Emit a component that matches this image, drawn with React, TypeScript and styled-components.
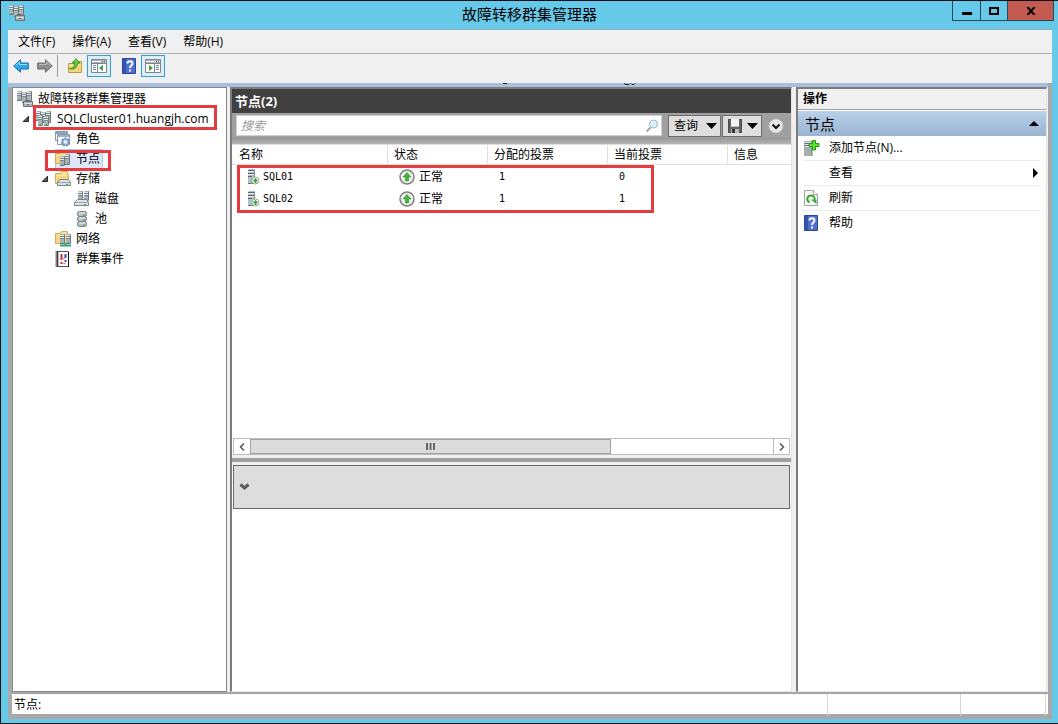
import React from "react";
import styled, { createGlobalStyle, css } from "styled-components";

const uiFont = `"Open Sans", "Noto Sans CJK SC", sans-serif`;

const GlobalStyle = createGlobalStyle`
  *, *::before, *::after { box-sizing: border-box; }
  body { margin: 0; font-family: ${uiFont}; font-size: 12px; line-height: 20px; color: #000; }
  button, input { font: inherit; color: inherit; }
  button { padding: 0; border: 0; background: none; cursor: default; }
  svg { display: block; flex: none; }
  ul { list-style: none; margin: 0; padding: 0; }
`;

/* ---------- window frame ---------- */

const Window = styled.div`
  display: flex;
  flex-direction: column;
  min-height: 100vh;
  background: #67c9ea;
  border: solid #0a0f14;
  border-width: 1px 0 1px 1px;
`;

const TitleBar = styled.header`
  display: grid;
  grid-template-columns: 1fr auto 1fr;
  height: 28px;
  padding: 0 4px 0 9px;
`;

const TitleIcon = styled.div`
  margin-left: -1px;
  padding-top: 4px;
`;

const Title = styled.h1`
  margin: 0;
  padding-right: 5px;
  font-size: 15px;
  font-weight: 400;
  line-height: 27px;
`;

const WindowButtons = styled.div`
  display: flex;
  justify-self: end;
  height: 20px;
  border: solid #274a58;
  border-width: 0 1px 1px;
`;

const WindowButton = styled.button<{ $wide?: boolean }>`
  display: flex;
  align-items: center;
  justify-content: center;
  width: ${(p) => (p.$wide ? 46 : 27)}px;
  background: ${(p) => (p.$wide ? "#c35b50" : "transparent")};
  & + & { border-left: 1px solid #274a58; }
`;

const Client = styled.div`
  flex: 1;
  display: flex;
  flex-direction: column;
  margin: 0 6px 4px 7px;
  border-top: 1px solid #8fb3c1;
  background: #a9a9a9;
`;

const MenuBar = styled.nav`
  display: flex;
  gap: 17px;
  height: 24px;
  padding: 0 10px;
  background: #f0f0f0;
  border-bottom: 1px solid #b0b0b0;
`;

const MenuItem = styled.button`
  line-height: 22px;
`;

const ToolBar = styled.div`
  display: flex;
  align-items: center;
  height: 29px;
  padding: 1px;
  padding-bottom: 6px;
  background: #f0f0f0;
`;

const ToolButton = styled.button<{ $active?: boolean }>`
  display: flex;
  align-items: center;
  justify-content: center;
  width: 24px;
  height: 22px;
  border: 1px solid ${(p) => (p.$active ? "#35a0cc" : "transparent")};
  background: ${(p) => (p.$active ? "#dcedf6" : "transparent")};
`;

const ToolDivider = styled.span`
  width: 1px;
  height: 22px;
  background: #9a9a9a;
`;

const ToolGroup = styled.div`
  display: flex;
  & + & { margin-left: 6px; }
  ${ToolDivider} + & { margin-left: 5px; }
`;

const Strip = styled.div`
  height: 4px;
  margin-right: 4px;
  background: #a9bfdc;
`;

const Panels = styled.main`
  flex: 1;
  display: grid;
  grid-template-columns: 215px minmax(0, 1fr) 251px;
  column-gap: 4px;
  margin: 0 4px;
  padding-right: 1px;
  background: #f0f0f0;
`;

const StatusBar = styled.footer`
  display: grid;
  grid-template-columns: 1fr 133px 85px 3px;
  height: 21px;
  margin: 1px 4px 5px;
  border-top: 1px solid #a0a0a0;
  background: #fff;
`;

const StatusCell = styled.div`
  padding-left: 2px;
  line-height: 22px;
  & + & { border-left: 1px solid #d7d7d7; }
`;

/* ---------- navigation tree ---------- */

const TreePanel = styled.nav`
  padding-top: 1px;
  border: 1px solid #828790;
  background: #fff;
`;

const TreeRow = styled.li<{ $level: number }>`
  position: relative;
  display: flex;
  align-items: center;
  height: 20px;
  padding-left: ${(p) => (p.$level ? p.$level * 19 - 10 : 4)}px;
`;

const Expander = styled.span`
  width: 14px;
`;

const TreeItem = styled.button<{ $selected?: boolean }>`
  display: flex;
  align-items: center;
  gap: 5px;
  height: 20px;
  padding-right: 3px;
  white-space: nowrap;
  ${(p) =>
    p.$selected &&
    css`
      background: #dce6f8;
      box-shadow: inset 0 0 0 1px #b5c9ea;
    `}
`;

const Marker = styled.span<{ $left: number; $top: number; $width: number; $height: number }>`
  position: absolute;
  left: ${(p) => p.$left}px;
  top: ${(p) => p.$top}px;
  width: ${(p) => p.$width}px;
  height: ${(p) => p.$height}px;
  border: 3px solid #e33b3e;
  pointer-events: none;
`;

/* ---------- node list ---------- */

const Middle = styled.section`
  display: flex;
  flex-direction: column;
  margin-left: -1px;
  border: solid;
  border-width: 2px 1px 1px 2px;
  border-color: #7c7c7c #e3e3e3 #e3e3e3 #7c7c7c;
  background: #fff;
`;

const PaneTitle = styled.h2`
  margin: 0;
  padding-left: 3px;
  font-size: 13px;
  font-weight: 700;
  line-height: 24px;
  color: #fff;
  background: #404040;
`;

const SearchRow = styled.div`
  display: flex;
  align-items: flex-start;
  height: 31px;
  padding: 2px 7px 0 4px;
  background: linear-gradient(#a0a0a0 24px, #989898 25px, #b4b4b4);
`;

const SearchBox = styled.label`
  flex: 1;
  display: flex;
  align-items: center;
  height: 21px;
  margin-right: 6px;
  padding: 0 2px 0 4px;
  border: 1px solid #d0d0d0;
  background: #fff;
`;

const SearchInput = styled.input`
  flex: 1;
  min-width: 0;
  height: 18px;
  padding: 0;
  border: 0;
  outline: 0;
  background: transparent;
  &::placeholder { color: #9a9a9a; font-style: italic; opacity: 1; }
`;

const DropButton = styled.button<{ $width: number }>`
  display: flex;
  align-items: center;
  justify-content: space-between;
  width: ${(p) => p.$width}px;
  height: 22px;
  margin-right: 1px;
  padding: 0 3px 0 5px;
  line-height: 20px;
  border: 1px solid #6c6c6c;
  background: #dedede;
`;

const RoundButton = styled.button`
  margin: 3px 0 0 5px;
`;

const ListArea = styled.div`
  position: relative;
  flex: 21 1 0;
`;

const Table = styled.table`
  width: 100%;
  table-layout: fixed;
  border-collapse: separate;
  border-spacing: 0;
`;

const HeadCell = styled.th`
  height: 21px;
  padding: 1px 0 0 6px;
  font-weight: 400;
  line-height: 18px;
  text-align: left;
  border: solid #dfdfdf;
  border-width: 1px 1px 1px 0;
  &:last-child { border-right: 0; }
  &:first-child { padding-left: 7px; }
`;

const Cell = styled.td`
  height: 22px;
  padding: 2px 0 0 11px;
  font-family: "DejaVu Sans Mono", "Noto Sans CJK SC", monospace;
  font-size: 10px;
  line-height: 20px;
  &:first-child { padding-left: 15px; }
`;

const IconText = styled.span<{ $gap: number; $large?: boolean }>`
  display: flex;
  align-items: center;
  gap: ${(p) => p.$gap}px;
  font-size: ${(p) => (p.$large ? 12 : 10)}px;
`;

const ScrollBar = styled.div`
  display: grid;
  grid-template-columns: 16px minmax(0, 1fr) 16px;
  height: 17px;
  margin: 0 1px;
  border: 1px solid #bdbdbd;
`;

const ScrollArrow = styled.button`
  display: flex;
  align-items: center;
  justify-content: center;
  &:last-child { border-left: 1px solid #bdbdbd; }
`;

const ScrollThumb = styled.div`
  display: flex;
  align-items: center;
  justify-content: center;
  width: 69%;
  border: 1px solid #a0a0a0;
  background: #dcdcdc;
`;

const Splitter = styled.div`
  height: 10px;
  border: solid #f0f0f0;
  border-width: 3px 0;
  background: #a0a0a0;
`;

const DetailsHead = styled.div`
  display: flex;
  align-items: center;
  height: 44px;
  margin: 0 1px;
  padding-left: 5px;
  border: 1px solid #696969;
  background: #dddddd;
`;

const DetailsBody = styled.div`
  flex: 13 1 0;
`;

/* ---------- actions ---------- */

const Actions = styled.aside`
  border: solid;
  border-width: 2px 1px 1px 2px;
  border-color: #7c7c7c #e3e3e3 #e3e3e3 #7c7c7c;
  background: #fff;
`;

const ActionsTitle = styled.h2`
  margin: 0 0 1px;
  padding-left: 5px;
  font-size: 12px;
  font-weight: 700;
  line-height: 20px;
  background: #f0f0f0;
  border-bottom: 1px solid #a0a0a0;
`;

const ActionsGroup = styled.button`
  display: flex;
  align-items: center;
  justify-content: space-between;
  width: 100%;
  height: 25px;
  padding: 0 7px;
  font-size: 15px;
  background: linear-gradient(#b9d1ea, #99b4d1);
`;

const ActionItem = styled.li`
  margin: 0 5px;
  & + & { border-top: 1px solid #ececec; }
`;

const ActionButton = styled.button`
  display: grid;
  grid-template-columns: 16px 1fr auto;
  gap: 9px;
  align-items: center;
  width: 100%;
  height: 24px;
  padding-left: 1px;
  text-align: left;
`;

/* ---------- icons ---------- */

const Tower = ({ x, y, h = 10 }: { x: number; y: number; h?: number }) => (
  <g>
    <path d={`M${x} ${y + 1}l1-1h4v${h}l-1 1h-4z`} fill="#aab4b8" />
    <path d={`M${x + 4} ${y + 1}l1-1v${h}l-1 1z`} fill="#6d787d" />
    <path d={`M${x} ${y + 1.5}h4M${x} ${y + 3.5}h4`} stroke="#e3e9eb" />
    <path d={`M${x} ${y + 2.5}h4M${x} ${y + 4.5}h4`} stroke="#7b868c" />
    <path d={`M${x + 2} ${y + h - 0.5}h1`} stroke="#3fae4c" />
    <path d={`M${x} ${y + h + 0.5}h4`} stroke="#6d787d" />
  </g>
);

const ClusterIcon = ({ box = true }: { box?: boolean }) => (
  <svg width="16" height="16" viewBox="0 0 16 16">
    <Tower x={0} y={0} h={9} />
    <Tower x={10} y={0} h={11} />
    <Tower x={5} y={1} h={10} />
    {box ? (
      <g>
        <path d="M8.500 11V9.500h4V11" fill="none" stroke="#5f696e" />
        <path d="M6.500 10.500h9v5h-9z" fill="#a9b0b3" stroke="#6a7479" />
        <path d="M7 12.500h8" stroke="#dce1e3" />
        <path d="M10 13.500h2" stroke="#5f696e" />
      </g>
    ) : (
      <g>
        <Tower x={2} y={4} h={10} />
        <Tower x={8} y={5} h={9} />
      </g>
    )}
  </svg>
);

const Folder = () => (
  <g>
    <path d="M.5 2.500h5l1-2h6v3h1v9H.5z" fill="#f4d782" stroke="#d2ad5c" />
    <path d="M7.500 2h4" stroke="#fff4c8" />
    <path d="M1.500 4.500h11" stroke="#fbeab0" />
  </g>
);

const RolesIcon = () => (
  <svg width="16" height="16" viewBox="0 0 16 16">
    <path d="M.5.5h12v9H.5z" fill="#f4f7f9" stroke="#8b99a6" />
    <path d="M1 2h11" stroke="#8aa4be" strokeWidth="2" />
    <path d="M2.500 3.500h12v10h-12z" fill="#f8fafb" stroke="#8b99a6" />
    <path d="M3 5h11" stroke="#9db5cc" strokeWidth="2" />
    <circle cx="10.500" cy="11" r="3.500" fill="#a9c8e2" stroke="#5e87ad" strokeWidth="2" strokeDasharray="2 1" />
    <circle cx="10.500" cy="11" r="1.500" fill="#eef5fa" />
  </svg>
);

const NodesIcon = () => (
  <svg width="16" height="16" viewBox="0 0 16 16">
    <Folder />
    <Tower x={5} y={5} h={9} />
    <Tower x={10} y={3} h={10} />
  </svg>
);

const StorageIcon = () => (
  <svg width="16" height="16" viewBox="0 0 16 16">
    <Folder />
    <path d="M4.500 8.500l-2 3v3h13v-3l-2-3z" fill="#dfe3e5" stroke="#78828a" />
    <path d="M3 11.500h12" stroke="#9aa4aa" />
    <path d="M11 13.500h2" stroke="#37b34a" />
  </svg>
);

const DiskIcon = () => (
  <svg width="16" height="16" viewBox="0 0 16 16">
    <Tower x={4} y={0} h={9} />
    <Tower x={10} y={0} h={9} />
    <path d="M3.500 8.500l-3 3v3h14v-3l-2-3z" fill="#dfe3e5" stroke="#78828a" />
    <path d="M1 11.500h13" stroke="#9aa4aa" />
    <path d="M10 13.500h2" stroke="#37b34a" />
  </svg>
);

const PoolIcon = () => (
  <svg width="16" height="16" viewBox="0 0 16 16">
    {[0, 5, 10].map((y) => (
      <g key={y}>
        <rect x="3.500" y={y + 0.5} width="9" height="5" rx="2" fill="#b6bfc2" stroke="#737d82" />
        <path d={`M5 ${y + 2}h6`} stroke="#eef1f2" />
        <path d={`M9 ${y + 4}h2`} stroke="#399c49" />
      </g>
    ))}
  </svg>
);

const NetworkIcon = () => (
  <svg width="16" height="16" viewBox="0 0 16 16">
    <Folder />
    <Tower x={5} y={3} h={9} />
    <Tower x={11} y={3} h={9} />
    <path d="M5 14.500h11M10.500 12v3" stroke="#2aa37a" strokeWidth="2" />
  </svg>
);

const EventsIcon = () => (
  <svg width="16" height="16" viewBox="0 0 16 16">
    <path d="M2.500.5h11v15h-11z" fill="#fff" stroke="#555" />
    <path d="M13.500 1v15" stroke="#111" />
    <path d="M2 .5v15" stroke="#111" strokeWidth="3" strokeDasharray="1 1" />
    <path d="M6.500 3v6M6.500 11v2" stroke="#d2232a" strokeWidth="2" />
    <path d="M10.500 3v4M10.500 9v2" stroke="#3a49b5" strokeWidth="2" />
    <path d="M5 9l5-2M8 12l3 1" stroke="#e0737a" />
  </svg>
);

const BackIcon = ({ grey }: { grey?: boolean }) => (
  <svg width="16" height="14" viewBox="0 0 16 14">
    <g transform={grey ? "matrix(-1 0 0 1 16 0)" : undefined}>
      <path
        d="M.7 7L7.500.8V4h7.800v6H7.500v3.200z"
        fill={grey ? "#8d8d8d" : "#2fa5ea"}
        stroke={grey ? "#6c6c6c" : "#176fae"}
      />
      <path d="M2.500 6.500L6.500 3v2.500h7.500" fill="none" stroke={grey ? "#b9b9b9" : "#9bdcff"} />
    </g>
  </svg>
);

const UpFolderIcon = () => (
  <svg width="16" height="16" viewBox="0 0 16 16">
    <path d="M1.500 5.500h5l2-2h6v11h-13z" fill="#f3d37c" stroke="#bf9a47" />
    <path d="M2 7.500h12" stroke="#fdebb0" />
    <path d="M2.500 10.500c4 0 5-2 5-5.500H5L9 .8l4 4.200h-2.500c0 5-4 7-8 5.500z" fill="#6acb3c" stroke="#3a9427" />
  </svg>
);

const PaneIcon = ({ right }: { right?: boolean }) => (
  <svg width="16" height="14" viewBox="0 0 16 14">
    <path d="M.5.5h15v13H.5z" fill="#fff" stroke="#7e8790" />
    <path d="M1 1.500h14M1 3.500h14" stroke="#a9b0b7" />
    <path d="M11 2.500h1M13 2.500h1" stroke="#3b4249" />
    <path d="M1 4.500h14" stroke="#7e8790" />
    {right ? (
      <g>
        <path d="M9.500 5v8" stroke="#7e8790" />
        <path d="M11 6.500h3M11 8.500h3M11 10.500h3" stroke="#6d8ba9" />
        <path d="M4 6l4 3-4 3z" fill="#3aa535" />
      </g>
    ) : (
      <g>
        <path d="M6.500 5v8" stroke="#7e8790" />
        <path d="M2 6.500h3M2 8.500h3M2 10.500h3" stroke="#6d8ba9" />
        <path d="M12 6L8 9l4 3z" fill="#3aa535" />
      </g>
    )}
  </svg>
);

const HelpIcon = () => (
  <svg width="14" height="16" viewBox="0 0 14 16">
    <path d="M.5.5h13v15H.5z" fill="#4f70cd" stroke="#2a479f" />
    <path d="M1 1h3v14H1z" fill="#3454b2" />
    <path d="M5.500 5.500C5.500 2.500 10.500 2.500 10.500 5.500c0 2-2.500 2-2.500 4.500M8 11.500v2" fill="none" stroke="#fff" strokeWidth="2" />
  </svg>
);

const SearchIcon = () => (
  <svg width="14" height="14" viewBox="0 0 14 14">
    <path d="M1.500 12.500l4-4" stroke="#a7a7a7" strokeWidth="2" />
    <circle cx="8.500" cy="5" r="4" fill="#d9effa" stroke="#9db3c2" />
    <path d="M6.500 4.500c0-1 1-2 2-2" fill="none" stroke="#fff" />
  </svg>
);

const DownCaret = () => (
  <svg width="11" height="6" viewBox="0 0 11 6">
    <path d="M0 0h11L5.500 6z" />
  </svg>
);

const SaveIcon = () => (
  <svg width="14" height="14" viewBox="0 0 14 14">
    <path d="M0 0h14v14H1l-1-1z" fill="#636363" />
    <path d="M.5.5h13v13H.5z" fill="none" stroke="#484848" />
    <path d="M3 0h8v8H3z" fill="#f4f4f4" />
    <path d="M3 7.500h8" stroke="#c4c4c4" />
    <path d="M3 10h8v4H3z" fill="#b9b9b9" />
    <path d="M4 10h3v4H4z" fill="#333" />
  </svg>
);

const ExpandIcon = () => (
  <svg width="16" height="16" viewBox="0 0 16 16">
    <circle cx="8" cy="8" r="7" fill="#e6e6e6" stroke="#c4c4c4" />
    <path d="M4.500 6.500L8 10l3.500-3.500" fill="none" stroke="#111" strokeWidth="2" />
  </svg>
);

const ServerIcon = () => (
  <svg width="13" height="16" viewBox="0 0 13 16">
    <path d="M1 1l1-1h6v14l-1 1H1z" fill="#b3bfc5" />
    <path d="M7.500 1v13" stroke="#7f8b91" />
    <path d="M1 1.500h6M1 4.500h6M1 7.500h4" stroke="#59666d" />
    <path d="M1 2.500h6M1 5.500h6" stroke="#e7edf0" />
    <path d="M1 14.500h5" stroke="#6b777d" />
    <circle cx="8.500" cy="11.500" r="3.500" fill="#eef3ee" stroke="#a3aaa3" />
    <path d="M8.500 9l2.500 3H9.500v2h-2v-2H6z" fill="#32a72c" />
  </svg>
);

const OkIcon = () => (
  <svg width="16" height="16" viewBox="0 0 16 16">
    <circle cx="8" cy="8" r="7" fill="#eeeeee" stroke="#7f7f7f" strokeWidth="1.500" />
    <path d="M8 3.500l4 4.500H9.500v4h-3V8H4z" fill="#3db832" stroke="#258a20" strokeWidth=".5" />
  </svg>
);

const AddNodeIcon = () => (
  <svg width="16" height="16" viewBox="0 0 16 16">
    <path d="M0 1h8v15H0z" fill="#a4adb0" />
    <path d="M8 1v15" stroke="#767f83" />
    <path d="M1 2.500h6M1 4.500h6M1 6.500h6" stroke="#e6ebec" />
    <path d="M1 3.500h6M1 5.500h6" stroke="#5d696f" />
    <path d="M5 14.500h2" stroke="#7ef024" />
    <path d="M8.500.5h3v3h3.500v3h-3.500v3.500h-3V6.500H5v-3h3.500z" fill="#5fdc2c" stroke="#239a17" />
  </svg>
);

const RefreshIcon = () => (
  <svg width="14" height="16" viewBox="0 0 14 16">
    <path d="M.5.5h9l4 4v11H.5z" fill="#f6f8f6" stroke="#a5a5a5" />
    <path d="M9.500.5v4h4" fill="#fff" stroke="#a5a5a5" />
    <path d="M5.500 12.500C1.500 10 3.500 5.500 7 5.500s4.500 3 3 5.500" fill="none" stroke="#3da838" strokeWidth="2" />
    <path d="M7 9.500h5.500V14z" fill="#3da838" />
  </svg>
);

const TreeArrow = () => (
  <svg width="8" height="8" viewBox="0 0 8 8">
    <path d="M6.500 1.200v5.300H1.200z" fill="#595959" stroke="#262626" />
  </svg>
);

/* ---------- data ---------- */

type Node = {
  level: number;
  label: string;
  icon: React.ReactNode;
  open?: boolean;
  selected?: boolean;
  marker?: { left: number; top: number; width: number; height: number };
};

const nodes: Node[] = [
  { level: 0, label: "故障转移群集管理器", icon: <ClusterIcon /> },
  {
    level: 1,
    label: "SQLCluster01.huangjh.com",
    icon: <ClusterIcon box={false} />,
    open: true,
    marker: { left: 20, top: -4, width: 184, height: 25 },
  },
  { level: 2, label: "角色", icon: <RolesIcon /> },
  {
    level: 2,
    label: "节点",
    icon: <NodesIcon />,
    selected: true,
    marker: { left: 32, top: 1, width: 66, height: 21 },
  },
  { level: 2, label: "存储", icon: <StorageIcon />, open: true },
  { level: 3, label: "磁盘", icon: <DiskIcon /> },
  { level: 3, label: "池", icon: <PoolIcon /> },
  { level: 2, label: "网络", icon: <NetworkIcon /> },
  { level: 2, label: "群集事件", icon: <EventsIcon /> },
];

const servers = [
  { name: "SQL01", state: "正常", assigned: 1, current: 0 },
  { name: "SQL02", state: "正常", assigned: 1, current: 1 },
];

const actions = [
  { label: "添加节点(N)...", icon: <AddNodeIcon /> },
  { label: "查看", icon: <span />, submenu: true },
  { label: "刷新", icon: <RefreshIcon /> },
  { label: "帮助", icon: <HelpIcon /> },
];

export default function App() {
  return (
    <Window>
      <GlobalStyle />
      <TitleBar>
        <TitleIcon>
          <ClusterIcon />
        </TitleIcon>
        <Title>故障转移群集管理器</Title>
        <WindowButtons>
          <WindowButton aria-label="最小化">
            <svg width="10" height="10" viewBox="0 0 10 10">
              <path d="M0 6h10v3H0z" />
            </svg>
          </WindowButton>
          <WindowButton aria-label="最大化">
            <svg width="10" height="8" viewBox="0 0 10 8">
              <path d="M1 1h8v6H1z" fill="none" stroke="#000" strokeWidth="2" />
            </svg>
          </WindowButton>
          <WindowButton $wide aria-label="关闭">
            <svg width="10" height="8" viewBox="0 0 10 8">
              <path d="M1.500 0l7 8M8.500 0l-7 8" stroke="#000" strokeWidth="2" />
            </svg>
          </WindowButton>
        </WindowButtons>
      </TitleBar>

      <Client>
        <MenuBar>
          {["文件(F)", "操作(A)", "查看(V)", "帮助(H)"].map((m) => (
            <MenuItem key={m}>{m}</MenuItem>
          ))}
        </MenuBar>
        <ToolBar>
          <ToolGroup>
            <ToolButton aria-label="后退">
              <BackIcon />
            </ToolButton>
            <ToolButton aria-label="前进">
              <BackIcon grey />
            </ToolButton>
          </ToolGroup>
          <ToolDivider />
          <ToolGroup>
            <ToolButton aria-label="向上">
              <UpFolderIcon />
            </ToolButton>
            <ToolButton $active aria-label="显示控制台树">
              <PaneIcon />
            </ToolButton>
          </ToolGroup>
          <ToolGroup>
            <ToolButton aria-label="帮助">
              <HelpIcon />
            </ToolButton>
            <ToolButton $active aria-label="显示操作窗格">
              <PaneIcon right />
            </ToolButton>
          </ToolGroup>
        </ToolBar>
        <Strip>
          <svg width="640" height="4" viewBox="0 0 640 4">
            <path d="M495 .5h4M616 .5l2 1h3l1-1M623 .5l1 1h2l1-1" fill="none" stroke="#222" />
          </svg>
        </Strip>

        <Panels>
          <TreePanel aria-label="控制台树">
            <ul>
              {nodes.map((n) => (
                <TreeRow key={n.label} $level={n.level}>
                  {n.level > 0 && <Expander>{n.open && <TreeArrow />}</Expander>}
                  <TreeItem $selected={n.selected}>
                    {n.icon}
                    {n.label}
                  </TreeItem>
                  {n.marker && (
                    <Marker
                      $left={n.marker.left}
                      $top={n.marker.top}
                      $width={n.marker.width}
                      $height={n.marker.height}
                    />
                  )}
                </TreeRow>
              ))}
            </ul>
          </TreePanel>

          <Middle>
            <PaneTitle>节点(2)</PaneTitle>
            <SearchRow>
              <SearchBox>
                <SearchInput type="text" placeholder="搜索" aria-label="搜索" />
                <SearchIcon />
              </SearchBox>
              <DropButton $width={53}>
                查询
                <DownCaret />
              </DropButton>
              <DropButton $width={40} aria-label="保存查询">
                <SaveIcon />
                <DownCaret />
              </DropButton>
              <RoundButton aria-label="展开">
                <ExpandIcon />
              </RoundButton>
            </SearchRow>
            <ListArea>
              <Table>
                <colgroup>
                  <col width="156" />
                  <col width="100" />
                  <col width="120" />
                  <col width="120" />
                  <col />
                </colgroup>
                <thead>
                  <tr>
                    {["名称", "状态", "分配的投票", "当前投票", "信息"].map((h) => (
                      <HeadCell key={h} scope="col">
                        {h}
                      </HeadCell>
                    ))}
                  </tr>
                </thead>
                <tbody>
                  {servers.map((s) => (
                    <tr key={s.name}>
                      <Cell>
                        <IconText $gap={3}>
                          <ServerIcon />
                          {s.name}
                        </IconText>
                      </Cell>
                      <Cell>
                        <IconText $gap={4} $large>
                          <OkIcon />
                          {s.state}
                        </IconText>
                      </Cell>
                      <Cell>{s.assigned}</Cell>
                      <Cell>{s.current}</Cell>
                      <Cell />
                    </tr>
                  ))}
                </tbody>
              </Table>
              <Marker $left={5} $top={21} $width={417} $height={48} />
            </ListArea>
            <ScrollBar>
              <ScrollArrow aria-label="向左滚动">
                <svg width="6" height="8" viewBox="0 0 6 8">
                  <path d="M5 .5L1.500 4 5 7.500" fill="none" stroke="#555" strokeWidth="1.500" />
                </svg>
              </ScrollArrow>
              <ScrollThumb>
                <svg width="9" height="7" viewBox="0 0 9 7">
                  <path d="M1 0v7M4.500 0v7M8 0v7" stroke="#666" strokeWidth="2" />
                </svg>
              </ScrollThumb>
              <ScrollArrow aria-label="向右滚动">
                <svg width="6" height="8" viewBox="0 0 6 8">
                  <path d="M1 .5L4.500 4 1 7.500" fill="none" stroke="#555" strokeWidth="1.500" />
                </svg>
              </ScrollArrow>
            </ScrollBar>
            <Splitter />
            <DetailsHead>
              <svg width="11" height="8" viewBox="0 0 11 8">
                <path d="M1.500 1.500l4 3.500 4-3.500" fill="none" stroke="#5c5c5c" strokeWidth="3" />
              </svg>
            </DetailsHead>
            <DetailsBody />
          </Middle>

          <Actions>
            <ActionsTitle>操作</ActionsTitle>
            <ActionsGroup>
              节点
              <svg width="10" height="5" viewBox="0 0 10 5">
                <path d="M0 5h10L5 0z" />
              </svg>
            </ActionsGroup>
            <ul>
              {actions.map((a) => (
                <ActionItem key={a.label}>
                  <ActionButton>
                    {a.icon}
                    {a.label}
                    {a.submenu && (
                      <svg width="8" height="10" viewBox="0 0 8 10">
                        <path d="M0 0v10l5-5z" />
                      </svg>
                    )}
                  </ActionButton>
                </ActionItem>
              ))}
            </ul>
          </Actions>
        </Panels>

        <StatusBar>
          <StatusCell>节点:</StatusCell>
          <StatusCell />
          <StatusCell />
          <StatusCell />
        </StatusBar>
      </Client>
    </Window>
  );
}
